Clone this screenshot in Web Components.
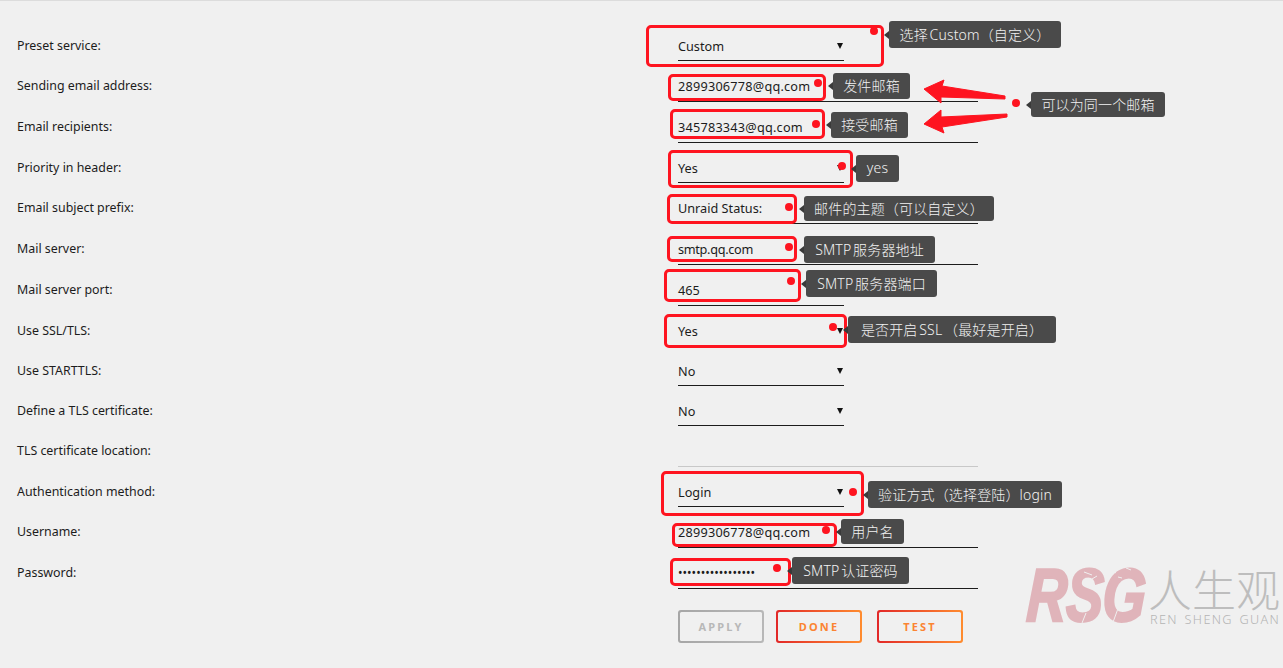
<!DOCTYPE html>
<html lang="zh">
<head>
<meta charset="utf-8">
<title>Notification settings</title>
<style>
html, body { margin: 0; height: 100%; overflow: hidden; background: #f0f0f0; }
</style>
</head>
<body>
<mail-settings>
  <setting-row kind="select" label="Preset service:">Custom</setting-row>
  <setting-row style="--track:.22px;--h:36px" label="Sending email address:">2899306778@qq.com</setting-row>
  <setting-row style="--track:.22px;--h:36px" label="Email recipients:">345783343@qq.com</setting-row>
  <setting-row kind="select" label="Priority in header:">Yes</setting-row>
  <setting-row style="--h:36px" label="Email subject prefix:">Unraid Status:</setting-row>
  <setting-row style="--track:-.3px;--h:36px" label="Mail server:">smtp.qq.com</setting-row>
  <setting-row style="--h:36px" kind="short" label="Mail server port:">465</setting-row>
  <setting-row kind="select" label="Use SSL/TLS:">Yes</setting-row>
  <setting-row kind="select" label="Use STARTTLS:">No</setting-row>
  <setting-row kind="select" label="Define a TLS certificate:">No</setting-row>
  <setting-row style="--h:36px" kind="off" label="TLS certificate location:"></setting-row>
  <setting-row kind="select" label="Authentication method:">Login</setting-row>
  <setting-row style="--track:.22px;--h:36px" label="Username:">2899306778@qq.com</setting-row>
  <setting-row style="--h:36px" kind="password" label="Password:">•••••••••••••••••</setting-row>
  <button-bar slot="actions">
    <flat-button disabled>APPLY</flat-button>
    <flat-button>DONE</flat-button>
    <flat-button gap="15">TEST</flat-button>
  </button-bar>

  <red-note slot="notes" box="646,25,238,42" dot="874,31" tip="889,21,172,27">选择 Custom（自定义）</red-note>
  <red-note slot="notes" box="668,74,158,27" dot="818,83" tip="833,73,77,26">发件邮箱</red-note>
  <red-note slot="notes" box="670,109,155,30" dot="816,124" tip="831,112,77,26">接受邮箱</red-note>
  <red-note slot="notes" box="668,150,185,38" dot="842,166" tip="856,155,43,27">yes</red-note>
  <red-note slot="notes" box="667,194,130,30" dot="789,207" tip="804,196,190,25">邮件的主题（可以自定义）</red-note>
  <red-note slot="notes" box="667,236,130,26" dot="789,247" tip="804,236,131,27">SMTP 服务器地址</red-note>
  <red-note slot="notes" box="664,269,137,33" dot="791,281" tip="806,270,131,27">SMTP 服务器端口</red-note>
  <red-note slot="notes" box="664,314,183,34" dot="833,327" tip="848,316,208,27">是否开启 SSL （最好是开启）</red-note>
  <red-note slot="notes" box="661,471,203,45" dot="853,492" tip="868,481,194,27">验证方式（选择登陆）login</red-note>
  <red-note slot="notes" box="672,523,165,24" dot="826,530" tip="841,519,63,25">用户名</red-note>
  <red-note slot="notes" box="670,558,121,28" dot="777,568" tip="792,557,117,27">SMTP 认证密码</red-note>
  <red-note slot="notes" dot="1016,103" tip="1031,92,134,25">可以为同一个邮箱</red-note>
  <red-arrows slot="notes"></red-arrows>
  <site-mark slot="notes"></site-mark>
</mail-settings>

<script>
const UI_FONT = `"Noto Sans", "Noto Sans CJK SC", sans-serif`;

class MailSettings extends HTMLElement {
    constructor() {
        super();
        this.attachShadow({mode: 'open'});
        this.shadowRoot.innerHTML = `
        <style>
        :host {
            display: block;
            position: relative;
            width: 1283px;
            height: 668px;
            box-sizing: border-box;
            border-top: 1px solid #dcdcdc;
            padding: 25px 0 0 17px;
            font-family: ${UI_FONT};
            color: #1c1c1c;
            background: #f0f0f0;
            overflow: hidden;
        }
        .rows {
            display: grid;
            grid-template-rows: 40px 41px 41px 40px 41px 41px 41px 40px 40px 40px 41px 40px 41px 40px;
        }
        .actions {
            margin: 17px 0 0 661px;
        }
        </style>
        <div class="rows"><slot></slot></div>
        <div class="actions"><slot name="actions"></slot></div>
        <slot name="notes"></slot>
        `;
    }
}

class SettingRow extends HTMLElement {
    constructor() {
        super();
        this.attachShadow({mode: 'open'});
    }

    connectedCallback() {
        const kind = this.getAttribute('kind') || 'text';
        const label = this.getAttribute('label');
        this.shadowRoot.innerHTML = `
        <style>
        :host {
            display: grid;
            grid-template-columns: 661px 300px;
            align-items: start;
            font-size: 12.4px;
        }
        .label {
            line-height: 18px;
            padding-top: 11px;
        }
        .field {
            position: relative;
            box-sizing: border-box;
            height: var(--h, 35px);
            padding-top: 11px;
            line-height: 18px;
            border-bottom: 1px solid #1c1c1c;
            font-size: 12.7px;
            letter-spacing: var(--track, 0);
        }
        .select, .short { width: 166px; }
        .off { border-bottom-color: #c8c8c8; }
        .password { letter-spacing: 0.02px; font-size: 12px; }
        .select::after {
            content: "";
            position: absolute;
            right: 1px;
            top: 17px;
            border-left: 3px solid transparent;
            border-right: 3px solid transparent;
            border-top: 6px solid #111;
        }
        </style>
        <div class="label">${label}</div>
        <div class="field ${kind}"><slot></slot></div>
        `;
    }
}

class ButtonBar extends HTMLElement {
    constructor() {
        super();
        this.attachShadow({mode: 'open'});
        this.shadowRoot.innerHTML = `
        <style>
        :host { display: flex; gap: 12px; }
        </style>
        <slot></slot>
        `;
    }
}

class FlatButton extends HTMLElement {
    constructor() {
        super();
        this.attachShadow({mode: 'open'});
    }

    connectedCallback() {
        const off = this.hasAttribute('disabled');
        const gap = this.getAttribute('gap');
        const stroke = off ? 'linear-gradient(90deg,#a6a6a6,#b8b8b8)' : 'linear-gradient(90deg,#e22828,#ff8c2f)';
        this.shadowRoot.innerHTML = `
        <style>
        :host {
            display: block;
            ${gap ? `margin-left: ${gap - 12}px;` : ''}
            width: 86px;
            height: 33px;
            box-sizing: border-box;
            padding: 2px;
            border-radius: 3px;
            background: ${stroke};
        }
        .in {
            display: flex;
            align-items: center;
            justify-content: center;
            height: 100%;
            border-radius: 1.5px;
            background: #f0f0f0;
            font-size: 11px;
            font-weight: 700;
            letter-spacing: 2.2px;
            color: ${off ? '#b8b8b8' : '#fb8433'};
        }
        </style>
        <div class="in"><slot></slot></div>
        `;
    }
}

// boxes, dots and tips lie over the form, so they sit at their own coordinates
class RedNote extends HTMLElement {
    constructor() {
        super();
        this.attachShadow({mode: 'open'});
    }

    connectedCallback() {
        const nums = (name) => (this.getAttribute(name) || '').split(',').map(Number);
        const box = nums('box');
        const dot = nums('dot');
        const tip = nums('tip');
        const boxHtml = this.hasAttribute('box')
            ? `<div class="box" style="left:${box[0]}px;top:${box[1] - 1}px;width:${box[2]}px;height:${box[3]}px"></div>`
            : '';
        this.shadowRoot.innerHTML = `
        <style>
        :host { display: contents; }
        .box {
            position: absolute;
            box-sizing: border-box;
            border: 3px solid #fe1420;
            border-radius: 5px;
        }
        .dot {
            position: absolute;
            width: 8px;
            height: 8px;
            margin: -4px 0 0 -4px;
            border-radius: 50%;
            background: #fe1420;
        }
        .tip {
            position: absolute;
            display: flex;
            align-items: center;
            justify-content: center;
            box-sizing: border-box;
            padding-bottom: 2px;
            white-space: nowrap;
            border-radius: 3px;
            background: #4a4a4a;
            color: #f2f2f2;
            font-size: 14px;
            font-weight: 300;
            letter-spacing: 0.15px;
            word-spacing: -2px;
        }
        .tip::before {
            content: "";
            position: absolute;
            left: -5px;
            top: 50%;
            margin-top: -4px;
            border-top: 4px solid transparent;
            border-bottom: 4px solid transparent;
            border-right: 5px solid #3a3a3a;
        }
        </style>
        ${boxHtml}
        <div class="dot" style="left:${dot[0]}px;top:${dot[1] - 1}px"></div>
        <div class="tip" style="left:${tip[0]}px;top:${tip[1] - 1}px;width:${tip[2]}px;height:${tip[3]}px"><slot></slot></div>
        `;
    }
}

class RedArrows extends HTMLElement {
    constructor() {
        super();
        this.attachShadow({mode: 'open'});
        this.shadowRoot.innerHTML = `
        <style>
        :host { position: absolute; left: 920px; top: 75px; width: 92px; height: 64px; }
        svg { display: block; }
        polygon { fill: #fe1420; stroke: #fe1420; stroke-width: 1; stroke-linejoin: round; }
        </style>
        <svg width="92" height="64" viewBox="920 76 92 64">
            <polygon points="924,89 944,80 942,86 1005,96 1005,99 941,97 941,103"/>
            <polygon points="924,124 941,110 941,117 1007,114 1007,117 942,127 944,133"/>
        </svg>
        `;
    }
}

class SiteMark extends HTMLElement {
    constructor() {
        super();
        this.attachShadow({mode: 'open'});
        this.shadowRoot.innerHTML = `
        <style>
        :host {
            position: absolute;
            left: 1026px;
            top: 555px;
            width: 257px;
            height: 78px;
        }
        .rsg {
            position: absolute;
            left: 3px;
            top: 3px;
            font: italic 700 75px/72px "Liberation Sans", sans-serif;
            letter-spacing: -1px;
            color: #e0b4ba;
            transform: scaleX(0.74) skewX(-4deg);
            transform-origin: left top;
            -webkit-text-stroke: 2.5px #e0b4ba;
        }
        svg { position: absolute; left: 0; top: 7px; }
        .cn {
            position: absolute;
            left: 122px;
            top: 10px;
            font: 300 44px/44px "Noto Sans CJK SC", sans-serif;
            color: #bdbdbd;
            white-space: nowrap;
        }
        .en {
            position: absolute;
            left: 124px;
            top: 54px;
            font: 300 12.7px/18px "Noto Sans", sans-serif;
            letter-spacing: 1.35px;
            word-spacing: 2px;
            color: #b4b4b4;
            white-space: nowrap;
        }
        </style>
        <div class="rsg">RSG</div>
        <svg width="120" height="66" fill="none" stroke="#f0f0f0" stroke-width="1">
            <path d="M58 9l8 3M66 16l5-3M84 6l6 4M100 5l5 2M92 14l4 1M10 57l9 1M60 50l-4 10M94 40l-8 22M40 8l4 1M72 58l6 1"/>
        </svg>
        <div class="cn">人生观</div>
        <div class="en">REN SHENG GUAN</div>
        `;
    }
}

customElements.define('mail-settings', MailSettings);
customElements.define('setting-row', SettingRow);
customElements.define('button-bar', ButtonBar);
customElements.define('flat-button', FlatButton);
customElements.define('red-note', RedNote);
customElements.define('red-arrows', RedArrows);
customElements.define('site-mark', SiteMark);
</script>
</body>
</html>
